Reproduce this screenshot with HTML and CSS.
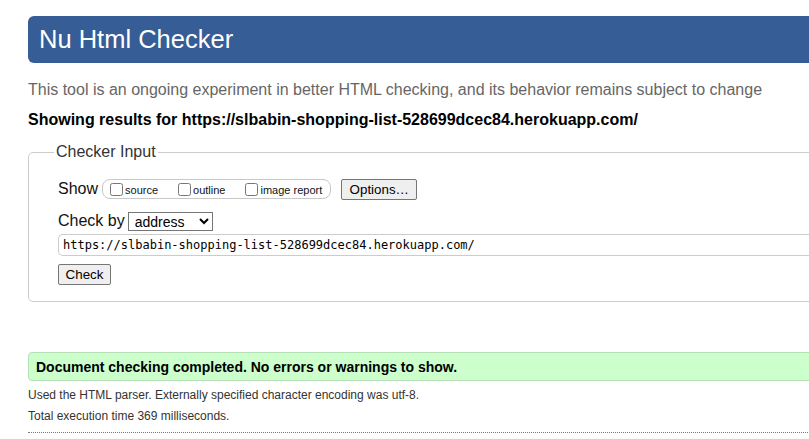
FILE: index.html
```html
<!DOCTYPE html>
<html lang="en">
<head>
<meta charset="utf-8">
<title>Nu Html Checker</title>
<link rel="stylesheet" href="styles.css">
</head>
<body>
<div class="page">
  <h1 class="title">Nu Html Checker</h1>
  <p class="intro">This tool is an ongoing experiment in better HTML checking, and its behavior remains subject to change</p>
  <p class="showing">Showing results for https://slbabin-shopping-list-528699dcec84.herokuapp.com/</p>
  <fieldset class="checker">
    <legend class="legend">Checker Input</legend>
    <div class="row show-row">
      <span class="label">Show</span>
      <span class="opts">
        <label class="opt"><input type="checkbox" class="cb">source</label>
        <label class="opt"><input type="checkbox" class="cb">outline</label>
        <label class="opt"><input type="checkbox" class="cb">image report</label>
      </span>
      <button class="btn options">Options…</button>
    </div>
    <div class="row by-row">
      <span class="label">Check by</span>
      <select class="sel"><option>address</option></select>
    </div>
    <input class="url" type="text" value="https://slbabin-shopping-list-528699dcec84.herokuapp.com/">
    <div class="row submit-row">
      <button class="btn check">Check</button>
    </div>
  </fieldset>
  <p class="success">Document checking completed. No errors or warnings to show.</p>
  <p class="details first">Used the HTML parser. Externally specified character encoding was utf-8.</p>
  <p class="details">Total execution time 369 milliseconds.</p>
  <hr class="rule">
</div>
</body>
</html>
```
FILE: styles.css
```css
html, body {
  margin: 0;
  padding: 0;
  overflow: hidden;
  background: #fff;
}
body {
  font-family: "Liberation Sans", Arial, sans-serif;
  color: #000;
}
.page {
  padding: 16px 0 0 28px;
  width: 1100px;
}
.title {
  margin: 0;
  height: 47px;
  line-height: 47px;
  padding-left: 11px;
  background: #365d95;
  color: #fff;
  font-size: 25.5px;
  font-weight: normal;
  border-radius: 6px 0 0 6px;
}
.intro {
  margin: 17px 0 0;
  line-height: 20px;
  font-size: 16px;
  color: #666;
}
.showing {
  margin: 10px 0 0;
  line-height: 20px;
  font-size: 16px;
  font-weight: bold;
}
.checker {
  margin: 12px 0 0;
  padding: 0 0 16px 29px;
  border: 1px solid #ccc;
  border-radius: 5px 0 0 5px;
}
.legend {
  margin-left: -4px;
  padding: 0 2px;
  font-size: 16px;
  line-height: 20px;
  color: #333;
}
.row {
  display: flex;
  align-items: center;
}
.label {
  font-size: 16px;
  color: #111;
}
.show-row {
  margin-top: 16px;
  height: 22px;
}
.opts {
  display: flex;
  align-items: center;
  margin-left: 4px;
  height: 18px;
  padding: 0 8px 0 3px;
  border: 1px solid #c8c8c8;
  border-radius: 8px;
  font-size: 11px;
  color: #111;
}
.opt {
  display: flex;
  align-items: center;
  margin-right: 16px;
  padding-top: 2px;
}
.opt:last-child {
  margin-right: 0;
}
.cb {
  margin: -2px 2px 0 4px;
  width: 13px;
  height: 13px;
}
.btn {
  font-family: "Liberation Sans", Arial, sans-serif;
  font-size: 13.33px;
  background: #efefef;
  border: 1px solid #767676;
  border-radius: 2px;
  color: #000;
  height: 21px;
  padding: 0 6px;
}
.options {
  margin-left: 10px;
  width: 76px;
}
.by-row {
  margin-top: 10px;
  height: 22px;
}
.sel {
  margin-left: 3px;
  width: 85px;
  height: 19px;
  font-family: "Liberation Sans", Arial, sans-serif;
  font-size: 14px;
  border: 1px solid #767676;
  border-radius: 0;
  background: #fff;
  padding: 0 0 0 2px;
}
.url {
  display: block;
  box-sizing: border-box;
  margin: 2px 0 0;
  width: 100%;
  height: 22px;
  padding: 0 4px;
  border: 1px solid #ccc;
  border-right: 0;
  border-radius: 5px 0 0 5px;
  font-family: "DejaVu Sans Mono", "Liberation Mono", monospace;
  font-size: 12px;
  color: #000;
}
.submit-row {
  margin-top: 8px;
}
.check {
  width: 53px;
}
.success {
  margin: 50px 0 0;
  height: 29px;
  box-sizing: border-box;
  line-height: 28px;
  padding-left: 7px;
  background: #ccffcc;
  border: 1px solid #b5dfb5;
  border-radius: 4px 0 0 4px;
  font-size: 14px;
  font-weight: bold;
}
.details {
  margin: 0;
  font-size: 12px;
  line-height: 21px;
  color: #333;
}
.details.first {
  margin-top: 4px;
}
.rule {
  margin: 5px 0 0;
  border: 0;
  border-top: 1px dotted #777;
}
```
